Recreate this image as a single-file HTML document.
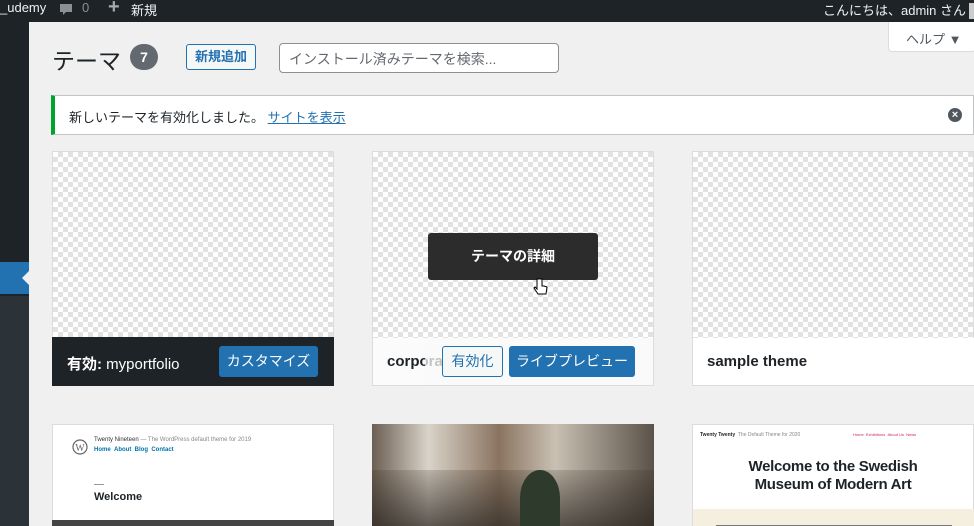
<!DOCTYPE html>
<html><head><meta charset="utf-8"><style>
*{box-sizing:border-box;margin:0;padding:0}
html,body{width:974px;height:526px;overflow:hidden}
body{background:#f0f0f1;font-family:"Liberation Sans","Noto Sans CJK JP",sans-serif;position:relative;color:#1d2327}
.abs{position:absolute}
.bar{left:0;top:0;width:974px;height:22px;background:#1d2327;color:#f0f0f1;font-size:13px}
.side{left:0;top:22px;width:29px;height:504px;background:#1d2327}
.card{border:1px solid #dcdcde;background:#fff}
.chk{background-color:#fff;background-image:linear-gradient(45deg,#e2e2e2 25%,transparent 25%,transparent 75%,#e2e2e2 75%),linear-gradient(45deg,#e2e2e2 25%,transparent 25%,transparent 75%,#e2e2e2 75%);background-size:10px 10px;background-position:0 0,5px 5px}
.btn{background:#2271b1;color:#fff;border-radius:3px;font-size:14px;text-align:center}
</style></head><body>
<div class="abs bar">
 <span class="abs" style="left:0;top:0px">_udemy</span>
 <svg class="abs" style="left:58px;top:2px" width="16" height="16" viewBox="0 0 16 16"><path d="M2 2h12v8H8l-3 3v-3H2z" fill="#8c8f94"/></svg>
 <span class="abs" style="left:82px;top:0px;color:#8c8f94">0</span>
 <span class="abs" style="left:108px;top:-4px;font-size:20px;color:#a7aaad;font-weight:bold">+</span>
 <span class="abs" style="left:131px;top:0px">新規</span>
 <span class="abs" style="left:823px;top:0px">こんにちは、admin さん</span>
 <div class="abs" style="left:969px;top:3px;width:5px;height:16px;background:#ccc"></div>
</div>
<div class="abs side"></div>
<div class="abs" style="left:0;top:296px;width:29px;height:230px;background:#2c3338"></div>
<div class="abs" style="left:0;top:262px;width:29px;height:32px;background:#2271b1"></div>
<div class="abs" style="left:22px;top:271px;width:0;height:0;border-top:7px solid transparent;border-bottom:7px solid transparent;border-right:7px solid #f0f0f1"></div>

<div class="abs" style="left:888px;top:22px;width:88px;height:30px;background:#fff;border:1px solid #dcdcde;border-top:0;border-radius:0 0 4px 4px;font-size:13px;color:#50575e;padding:7px 0 0 17px">ヘルプ ▼</div>

<div class="abs" style="left:52px;top:42px;font-size:23px;font-weight:400">テーマ</div>
<div class="abs" style="left:130px;top:44px;width:28px;height:26px;border-radius:13px;background:#646970;color:#fff;font-size:14px;font-weight:bold;text-align:center;line-height:26px">7</div>
<div class="abs" style="left:186px;top:44px;width:70px;height:26px;border:1px solid #2271b1;border-radius:3px;background:#f6f7f7;color:#2271b1;font-size:13px;font-weight:bold;text-align:center;line-height:24px">新規追加</div>
<div class="abs" style="left:279px;top:43px;width:280px;height:30px;border:1px solid #8c8f94;border-radius:4px;background:#fff;color:#646970;font-size:14px;padding:5px 9px">インストール済みテーマを検索...</div>

<div class="abs" style="left:51px;top:95px;width:923px;height:40px;background:#fff;border:1px solid #c3c4c7;border-left:4px solid #00a32a;font-size:13px;padding:11px 14px">新しいテーマを有効化しました。 <span style="color:#2271b1;text-decoration:underline">サイトを表示</span></div>
<div class="abs" style="left:948px;top:108px;width:14px;height:14px;border-radius:7px;background:#50575e;color:#fff;font-size:11px;text-align:center;line-height:14px;font-weight:bold">×</div>

<!-- row1 -->
<div class="abs card chk" style="left:52px;top:151px;width:282px;height:235px"></div>
<div class="abs" style="left:52px;top:337px;width:282px;height:49px;background:#1d2327"></div>
<div class="abs" style="left:67px;top:353px;color:#fff;font-size:15px"><b>有効:</b> myportfolio</div>
<div class="abs btn" style="left:219px;top:346px;width:99px;height:31px;line-height:31px">カスタマイズ</div>

<div class="abs card chk" style="left:372px;top:151px;width:282px;height:235px"></div>
<div class="abs" style="left:373px;top:338px;width:280px;height:47px;background:#fbfbfb"></div>
<div class="abs" style="left:387px;top:353px;font-size:15px;font-weight:bold">corporate</div>
<div class="abs" style="left:425px;top:338px;width:228px;height:47px;background:rgba(250,250,250,.75)"></div>
<div class="abs" style="left:442px;top:346px;width:61px;height:31px;border:1px solid #2271b1;border-radius:3px;background:#f6f7f7;color:#2271b1;font-size:14px;text-align:center;line-height:29px">有効化</div>
<div class="abs btn" style="left:509px;top:346px;width:126px;height:31px;line-height:31px">ライブプレビュー</div>
<div class="abs" style="left:428px;top:233px;width:170px;height:47px;background:#2c2c2c;border-radius:3px;color:#fff;font-size:14px;font-weight:bold;text-align:center;line-height:47px">テーマの詳細</div>
<svg class="abs" style="left:533px;top:278px" width="16" height="20" viewBox="0 0 16 20"><path d="M4 1v10l-2-2-1 1 4 6h8l1-7-3-1-2 0V1z" fill="#fff" stroke="#000" stroke-width="1"/></svg>

<div class="abs card chk" style="left:692px;top:151px;width:282px;height:235px"></div>
<div class="abs" style="left:693px;top:338px;width:281px;height:47px;background:#fff"></div>
<div class="abs" style="left:707px;top:353px;font-size:15px;font-weight:bold">sample theme</div>

<!-- row2 -->
<div class="abs card" style="left:52px;top:424px;width:282px;height:110px"></div>
<svg class="abs" style="left:72px;top:439px" width="16" height="16" viewBox="0 0 16 16"><circle cx="8" cy="8" r="7" fill="none" stroke="#666" stroke-width="1.2"/><text x="8" y="12" font-size="10" text-anchor="middle" fill="#666" font-family="Liberation Serif">W</text></svg>
<div class="abs" style="left:94px;top:437px;font-size:6px;color:#333">Twenty Nineteen <span style="color:#888">— The WordPress default theme for 2019</span></div>
<div class="abs" style="left:94px;top:447px;font-size:6px;color:#0073aa;font-weight:bold">Home &nbsp;About &nbsp;Blog &nbsp;Contact</div>
<div class="abs" style="left:94px;top:484px;width:10px;height:1px;background:#999"></div>
<div class="abs" style="left:94px;top:491px;font-size:11px;font-weight:bold">Welcome</div>
<div class="abs" style="left:52px;top:520px;width:282px;height:6px;background:#444"></div>

<div class="abs" style="left:372px;top:424px;width:282px;height:102px;background:linear-gradient(90deg,#6b5e52 0%,#d9d3c9 20%,#8a7460 45%,#c9c0b3 65%,#5a5148 100%)"></div>
<div class="abs" style="left:372px;top:470px;width:282px;height:56px;background:linear-gradient(180deg,rgba(60,50,40,.2),rgba(40,35,30,.7))"></div>
<div class="abs" style="left:520px;top:470px;width:40px;height:56px;background:#2d3a2c;border-radius:50% 50% 0 0"></div>

<div class="abs card" style="left:692px;top:424px;width:282px;height:110px"></div>
<div class="abs" style="left:700px;top:432px;font-size:5px;font-weight:bold">Twenty Twenty <span style="font-weight:normal;color:#888">&nbsp;The Default Theme for 2020</span></div>
<div class="abs" style="left:853px;top:432px;font-size:4px;color:#cd2653">Home &nbsp;Exhibitions &nbsp;About Us &nbsp;News</div>
<div class="abs" style="left:692px;top:458px;width:282px;text-align:center;font-size:15px;font-weight:bold;line-height:18px;letter-spacing:-.3px">Welcome to the Swedish<br>Museum of Modern Art</div>
<div class="abs" style="left:693px;top:509px;width:281px;height:17px;background:#f5efe0"></div>
<div class="abs" style="left:716px;top:525px;width:236px;height:1px;background:#777"></div>
</body></html>
